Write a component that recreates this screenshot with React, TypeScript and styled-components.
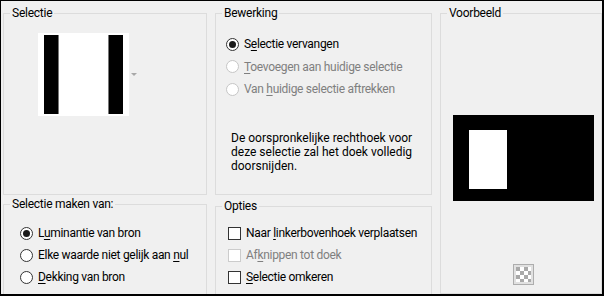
import styled, { createGlobalStyle } from 'styled-components'

const GlobalStyle = createGlobalStyle`
  html, body {
    margin: 0;
    padding: 0;
    background: #f0f0f0;
  }
  body {
    font-family: Roboto, 'Noto Sans', sans-serif;
    font-size: 12px;
    color: #000;
  }
`

const Window = styled.div`
  display: flex;
  gap: 8px;
  width: 604px;
  height: 296px;
  box-sizing: border-box;
  padding: 4px 0 0 2px;
  border-style: solid;
  border-color: #000;
  border-width: 1px 2px 2px 1px;
  background: #f0f0f0;
  overflow: hidden;
`

const Column = styled.div<{ $width: number; $gap: number }>`
  display: flex;
  flex-direction: column;
  flex-shrink: 0;
  width: ${(p) => p.$width}px;
  gap: ${(p) => p.$gap}px;
`

const Group = styled.fieldset<{ $height: number }>`
  display: flex;
  flex-direction: column;
  flex-shrink: 0;
  box-sizing: border-box;
  height: ${(p) => p.$height}px;
  min-width: 0;
  margin: 0;
  padding: 0;
  border: 1px solid #dcdcdc;
`

const Legend = styled.legend`
  margin-left: 6px;
  padding: 0 2px;
  font-size: 12px;
  line-height: 16px;
  letter-spacing: -0.25px;
  color: #000;
`

const Key = styled.u`
  text-decoration: underline;
  text-underline-offset: 2px;
`

/* Selectie */

const SourceRow = styled.div`
  display: flex;
  align-items: center;
  gap: 2px;
  padding: 12px 0 0 34px;
`

const DropArrow = styled.span`
  width: 0;
  height: 0;
  border-left: 3px solid transparent;
  border-right: 3px solid transparent;
  border-top: 3px solid #a8a8a8;
`

const SelectionThumb = () => (
  <svg width="91" height="83" viewBox="0 0 91 83">
    <rect width="91" height="83" fill="#fff" />
    <rect x="6" y="2" width="14" height="79" fill="#000" />
    <rect x="20" y="2" width="1" height="79" fill="#777" />
    <rect x="70" y="2" width="1" height="79" fill="#777" />
    <rect x="71" y="2" width="14" height="79" fill="#000" />
  </svg>
)

/* option rows */

const OptionList = styled.div<{ $top: number; $left: number; $row: number }>`
  display: flex;
  flex-direction: column;
  padding: ${(p) => p.$top}px 0 0 ${(p) => p.$left}px;

  & > * {
    height: ${(p) => p.$row}px;
  }
`

const Option = styled.label<{ $disabled?: boolean }>`
  display: flex;
  align-items: center;
  gap: 5px;
  line-height: 16px;
  letter-spacing: -0.3px;
  white-space: nowrap;
  color: ${(p) => (p.$disabled ? '#7f7f7f' : '#000')};
`

const Radio = styled.span<{ $checked?: boolean; $disabled?: boolean }>`
  display: flex;
  align-items: center;
  justify-content: center;
  flex-shrink: 0;
  box-sizing: border-box;
  width: 13px;
  height: 13px;
  border-radius: 50%;
  border: 1px solid ${(p) => (p.$disabled ? '#c6c6c6' : '#333')};
  background: #fff;

  &::after {
    content: '';
    display: ${(p) => (p.$checked ? 'block' : 'none')};
    width: 7px;
    height: 7px;
    border-radius: 50%;
    background: #1a1a1a;
  }
`

const Check = styled.span<{ $disabled?: boolean }>`
  flex-shrink: 0;
  box-sizing: border-box;
  width: 13px;
  height: 13px;
  border: 1px solid ${(p) => (p.$disabled ? '#cccccc' : '#333')};
  background: #fff;
`

const Note = styled.p`
  margin: 30px 0 0 15px;
  width: 200px;
  line-height: 14px;
  color: #000;
`

/* Voorbeeld */

const Preview = styled.div`
  display: flex;
  flex-direction: column;
  padding: 94px 0 0 12px;
`

const PreviewImage = () => (
  <svg width="141" height="86" viewBox="0 0 141 86">
    <rect width="141" height="86" fill="#000" />
    <rect x="16" y="15" width="38" height="59" fill="#fff" />
  </svg>
)

const CheckerButton = styled.div`
  display: flex;
  align-items: center;
  justify-content: center;
  width: 21px;
  height: 21px;
  box-sizing: border-box;
  margin: 63px 0 0 60px;
  border: 1px solid #adadad;
  background: #e1e1e1;
`

const Checker = () => (
  <svg width="15" height="15" viewBox="0 0 15 15">
    <rect width="15" height="15" fill="#fff" />
    {[0, 1, 2, 3].flatMap((r) =>
      [0, 1, 2, 3].map((c) =>
        (r + c) % 2 === 0 ? (
          <rect key={`${r}-${c}`} x={c * 4} y={r * 4} width="4" height="4" fill="#a9a9a9" />
        ) : null,
      ),
    )}
  </svg>
)

export default function App() {
  return (
    <>
      <GlobalStyle />
      <Window>
        <Column $width={204} $gap={1}>
          <Group $height={190}>
            <Legend>Selectie</Legend>
            <SourceRow>
              <SelectionThumb />
              <DropArrow />
            </SourceRow>
          </Group>
          <Group $height={110}>
            <Legend>Selectie maken van:</Legend>
            <OptionList $top={10} $left={16} $row={22}>
              <Option>
                <Radio $checked />
                <span>
                  L<Key>u</Key>minantie van bron
                </span>
              </Option>
              <Option>
                <Radio />
                <span>
                  Elke waarde niet gelijk aan <Key>n</Key>ul
                </span>
              </Option>
              <Option>
                <Radio />
                <span>
                  <Key>D</Key>ekking van bron
                </span>
              </Option>
            </OptionList>
          </Group>
        </Column>

        <Column $width={217} $gap={3}>
          <Group $height={190}>
            <Legend>Bewerking</Legend>
            <OptionList $top={12} $left={10} $row={22.5}>
              <Option>
                <Radio $checked />
                <span>
                  S<Key>e</Key>lectie vervangen
                </span>
              </Option>
              <Option $disabled>
                <Radio $disabled />
                <span>
                  <Key>T</Key>oevoegen aan huidige selectie
                </span>
              </Option>
              <Option $disabled>
                <Radio $disabled />
                <span>
                  Van <Key>h</Key>uidige selectie aftrekken
                </span>
              </Option>
            </OptionList>
            <Note>
              De oorspronkelijke rechthoek voor deze selectie zal het doek volledig doorsnijden.
            </Note>
          </Group>
          <Group $height={110}>
            <Legend>Opties</Legend>
            <OptionList $top={8} $left={12} $row={22}>
              <Option>
                <Check />
                <span>
                  Naar <Key>l</Key>inkerbovenhoek verplaatsen
                </span>
              </Option>
              <Option $disabled>
                <Check $disabled />
                <span>
                  Af<Key>k</Key>nippen tot doek
                </span>
              </Option>
              <Option>
                <Check />
                <span>
                  <Key>S</Key>electie omkeren
                </span>
              </Option>
            </OptionList>
          </Group>
        </Column>

        <Column $width={162} $gap={0}>
          <Group $height={289}>
            <Legend>Voorbeeld</Legend>
            <Preview>
              <PreviewImage />
              <CheckerButton>
                <Checker />
              </CheckerButton>
            </Preview>
          </Group>
        </Column>
      </Window>
    </>
  )
}
